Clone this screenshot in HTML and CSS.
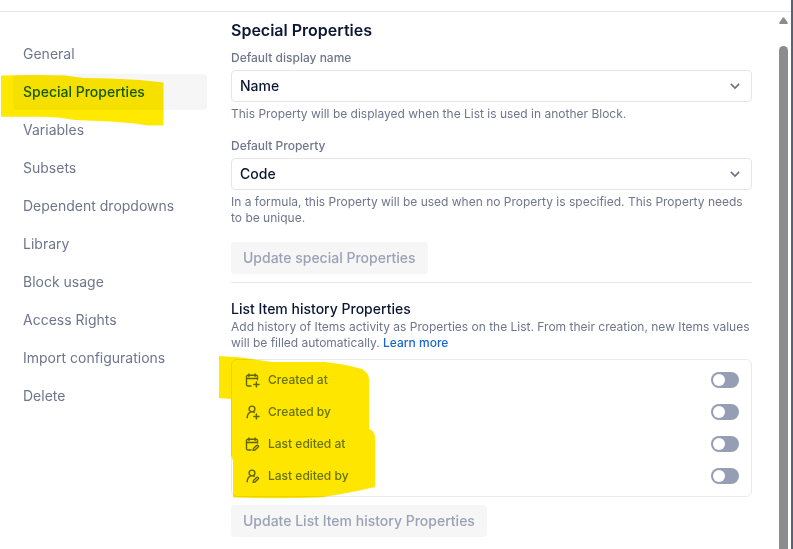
FILE: index.html
```
<!DOCTYPE html>
<html lang="en">
<head>
<meta charset="utf-8">
<title>Special Properties</title>
<link rel="stylesheet" href="styles.css">
</head>
<body>
<div class="window">
  <div class="app">
    <header class="topbar"></header>
    <div class="body">
      <nav class="sidebar">
        <a class="nav-item">General</a>
        <a class="nav-item active">Special Properties</a>
        <a class="nav-item">Variables</a>
        <a class="nav-item">Subsets</a>
        <a class="nav-item">Dependent dropdowns</a>
        <a class="nav-item">Library</a>
        <a class="nav-item">Block usage</a>
        <a class="nav-item">Access Rights</a>
        <a class="nav-item">Import configurations</a>
        <a class="nav-item">Delete</a>
      </nav>
      <main class="content">
        <h1 class="title">Special Properties</h1>
        <div class="field">
          <label class="label">Default display name</label>
          <div class="select"><span>Name</span><svg class="chevron" viewBox="0 0 12 8"><path d="M1.800 1.900 6 6.100l4.200-4.200"/></svg></div>
          <p class="hint">This Property will be displayed when the List is used in another Block.</p>
        </div>
        <div class="field">
          <label class="label">Default Property</label>
          <div class="select"><span>Code</span><svg class="chevron" viewBox="0 0 12 8"><path d="M1.800 1.900 6 6.100l4.200-4.200"/></svg></div>
          <p class="hint">In a formula, this Property will be used when no Property is specified. This Property needs<br>to be unique.</p>
        </div>
        <button class="button">Update special Properties</button>
        <hr class="divider">
        <h2 class="subtitle">List Item history Properties</h2>
        <p class="hint">Add history of Items activity as Properties on the List. From their creation, new Items values<br>will be filled automatically. <a class="link">Learn more</a></p>
        <div class="card">
          <div class="row">
            <svg class="icon" viewBox="0 0 16 16"><path d="M7 14H3.800a1.300 1.300 0 0 1-1.300-1.300V4.600A1.300 1.300 0 0 1 3.800 3.300h8.400a1.300 1.300 0 0 1 1.300 1.300v3.200M2.500 6.500h11M4.900 2V4.500M11.100 2V4.500M12.400 9.900v5.200M9.800 12.500h5.200"/></svg>
            <span class="row-name">Created at</span><span class="toggle"></span>
          </div>
          <div class="row">
            <svg class="icon" viewBox="0 0 16 16"><circle cx="8" cy="5" r="2.900"/><path d="M3.200 13.700c0-3 1.300-4.900 3.700-5.900M9.200 7.800l.9.700M12.400 9.900v5.200M9.800 12.500h5.200"/></svg>
            <span class="row-name">Created by</span><span class="toggle"></span>
          </div>
          <div class="row">
            <svg class="icon" viewBox="0 0 16 16"><path d="M7 14H3.800a1.300 1.300 0 0 1-1.300-1.300V4.600A1.300 1.300 0 0 1 3.800 3.300h8.400a1.300 1.300 0 0 1 1.300 1.300v2.400M2.500 6.500h11M4.900 2V4.500M11.100 2V4.500M9.100 14.300l.4-1.900 3-2.900a1.100 1.100 0 0 1 1.600 1.600l-3 2.900z"/></svg>
            <span class="row-name">Last edited at</span><span class="toggle"></span>
          </div>
          <div class="row">
            <svg class="icon" viewBox="0 0 16 16"><circle cx="8" cy="5" r="2.900"/><path d="M3.200 13.700c0-3 1.300-4.900 3.700-5.900M9.200 7.800l.9.600M9.100 14.300l.4-1.900 3-2.900a1.100 1.100 0 0 1 1.600 1.600l-3 2.900z"/></svg>
            <span class="row-name">Last edited by</span><span class="toggle"></span>
          </div>
        </div>
        <button class="button">Update List Item history Properties</button>
      </main>
      <div class="scrollbar">
        <svg class="scroll-up" viewBox="0 0 9 8"><path d="M3.700.8Q4.500-.3 5.300.8L8.700 5.600Q9.300 7 8 7H1Q-.3 7 .3 5.600z"/></svg>
        <div class="scroll-thumb"></div>
      </div>
    </div>
  </div>
  <!-- Marker strokes laid over the page -->
  <svg class="marker" viewBox="0 0 793 549">
    <path class="stroke-nav" d="M1 75.500Q34 74.500 65 75.500L84 78 110 78.500 140 80 163.500 82.500V125.500H148L135 123.500 110 121.500 75 120 58 117.500 40 116.800H1z"/>
    <path class="stroke-list" d="M219 356L242 357.500 258 360 272 362H325Q345 364 362 369 369 373 369 380V429Q375 431 375 438V487Q350 493 320 497.500 276 499 233 497.500V461L231 455V399L219 398z"/>
  </svg>
</div>
</body>
</html>
```

FILE: styles.css
```
* { box-sizing: border-box; }

body {
  margin: 0;
  background: #fff;
  font-family: Inter, "Liberation Sans", sans-serif;
  color: #0b1633;
}

.window {
  position: relative;
  height: 549px;
  overflow: hidden;
  background: #fff;
}

.app {
  display: flex;
  flex-direction: column;
  height: 100%;
  border-right: 2px solid #5a6175;
}

.topbar {
  flex: none;
  height: 12px;
  border-bottom: 1px solid #e5e6e9;
}

.body {
  display: flex;
  flex: 1;
  min-height: 0;
}

.sidebar {
  display: flex;
  flex-direction: column;
  gap: 2px;
  width: 207px;
  padding: 24px 0 0 13px;
}

.nav-item {
  height: 36px;
  padding-left: 10px;
  border-radius: 4px;
  font-size: 14px;
  line-height: 36px;
  color: #6e768c;
}

.nav-item.active {
  background: #f6f6f7;
  font-weight: 500;
  color: #14601c;
}

.content {
  width: 521px;
  margin-left: 24px;
  padding-top: 6px;
}

.title {
  margin: 0 0 8px;
  font-size: 16px;
  font-weight: 600;
  line-height: 24px;
}

.field { margin-bottom: 16px; }

.label {
  display: block;
  margin-bottom: 4px;
  font-size: 12px;
  font-weight: 500;
  line-height: 16px;
  color: #6e768c;
}

.select {
  display: flex;
  align-items: center;
  justify-content: space-between;
  height: 32px;
  margin-bottom: 4px;
  padding: 0 10px 0 8px;
  border: 1px solid #e4e5e8;
  border-radius: 4px;
  font-size: 14px;
  font-weight: 500;
  line-height: 20px;
}

.chevron {
  width: 12px;
  height: 8px;
  fill: none;
  stroke: #6b7288;
  stroke-width: 1.6;
}

.hint {
  margin: 0;
  font-size: 12px;
  line-height: 16px;
  color: #6e768c;
  white-space: nowrap;
}

.link { color: #1a66d0; font-weight: 500; }

.button {
  display: block;
  height: 32px;
  padding: 0 12px;
  border: 0;
  border-radius: 4px;
  background: #f6f6f7;
  font: 500 14px/32px Inter, "Liberation Sans", sans-serif;
  color: #9aa2b6;
}

.divider {
  height: 1px;
  margin: 8px 0 16px;
  border: 0;
  background: #e5e6e9;
}

.subtitle {
  margin: 0;
  font-size: 14px;
  font-weight: 500;
  line-height: 20px;
}

.card {
  margin: 8px 0;
  padding: 4px 12px;
  border: 1px solid #e9eaec;
  border-radius: 6px;
}

.row {
  display: flex;
  align-items: center;
  height: 32px;
}

.icon {
  width: 16px;
  height: 16px;
  margin-right: 8px;
  fill: none;
  stroke: #5f7085;
  stroke-width: 1.4;
  stroke-linecap: round;
  stroke-linejoin: round;
}

.row-name {
  flex: 1;
  font-size: 12px;
  font-weight: 500;
  line-height: 16px;
  color: #66808c;
}

.toggle {
  width: 28px;
  height: 16px;
  padding: 2px;
  border-radius: 8px;
  background: #959eb4;
}

.toggle::before {
  content: "";
  display: block;
  width: 12px;
  height: 12px;
  border-radius: 50%;
  background: #fff;
}

.scrollbar {
  display: flex;
  flex-direction: column;
  width: 9px;
  margin: 5px 3px 0 auto;
}

.scroll-up {
  width: 9px;
  height: 8px;
  fill: #8b8d8c;
}

.scroll-thumb {
  flex: 1;
  margin-top: 21px;
  border-radius: 5px 5px 0 0;
  background: #8b8d8c;
}

.marker {
  position: absolute;
  inset: 0;
  width: 793px;
  height: 549px;
  mix-blend-mode: multiply;
  pointer-events: none;
}

.stroke-nav { fill: #ffe900; }
.stroke-list { fill: #ffe600; }
```
